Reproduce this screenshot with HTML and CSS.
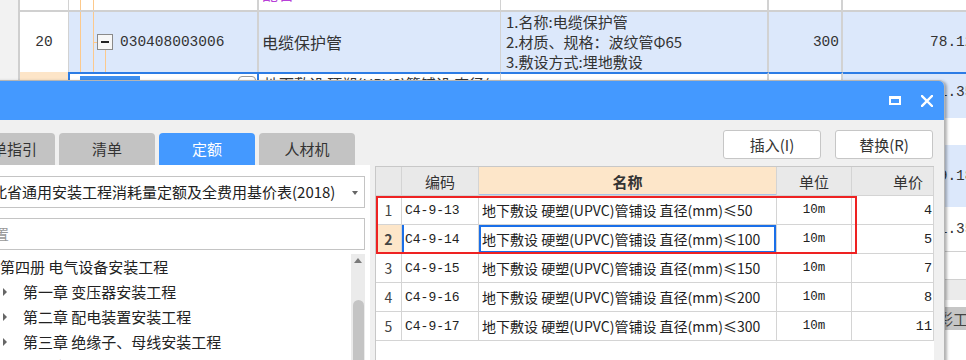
FILE: index.html
```html
<!DOCTYPE html>
<html lang="zh-CN">
<head>
    <meta charset="UTF-8">
    <meta name="viewport" content="width=device-width, initial-scale=1.0">
    <title>查询定额</title>
    <link rel="stylesheet" href="styles.css">
</head>
<body>

<!-- background sheet (partly covered by the dialog) -->
<div class="sheet">
    <div class="row row-top">
        <div class="c gut"></div>
        <div class="c no"></div>
        <div class="c code">
            <span class="vline v1"></span><span class="vline v2"></span>
            <span class="peek purple mono">030408003005</span>
        </div>
        <div class="c name"><span class="peek purple">配管</span></div>
        <div class="c desc"></div>
        <div class="c qty"><span class="peek purple mono">300.00</span></div>
        <div class="c price"></div>
    </div>

    <div class="row row-20">
        <div class="c gut"></div>
        <div class="c no mono">20</div>
        <div class="c code">
            <span class="vline v1"></span><span class="vline v2"></span>
            <span class="hline"></span><span class="vline v3"></span>
            <span class="fold"></span>
            <span class="mono">030408003006</span>
        </div>
        <div class="c name">电缆保护管</div>
        <div class="c desc">1.名称:电缆保护管<br>2.材质、规格：波纹管Φ65<br>3.敷设方式:埋地敷设</div>
        <div class="c qty mono">300</div>
        <div class="c price mono">78.12</div>
    </div>

    <div class="row row-edit">
        <div class="c gut"></div>
        <div class="c no"></div>
        <div class="c code">
            <span class="sel"></span>
            <span class="pick"></span>
        </div>
        <div class="c name">地下敷设 硬塑(UPVC)管铺设 直径(mm)≤100</div>
        <div class="c desc"></div>
        <div class="c qty"></div>
        <div class="c price mono">41.35</div>
    </div>

    <div class="row lo h27"><div class="fill"></div><div class="c price"></div></div>
    <div class="row lo h62 blue"><div class="fill"></div><div class="c price mono">69.18</div></div>
    <div class="row lo h45"><div class="fill"></div><div class="c price mono">41.35</div></div>
    <div class="row lo h28"><div class="fill"></div><div class="c price"></div></div>
    <div class="row lo h20 band"><div class="fill"></div><div class="c price"></div></div>
    <div class="row lo h7"><div class="fill"></div><div class="c price"></div></div>
    <div class="row lo h23 dark"><div class="fill"></div><div class="c label">色彩工程</div></div>
</div>

<!-- query dialog -->
<div class="dialog">
    <div class="titlebar">
        <span class="win-max"></span>
        <svg class="win-close" width="12" height="12" viewBox="0 0 12 12">
            <path d="M1 1 L11 11 M11 1 L1 11" stroke="#fff" stroke-width="2.4" stroke-linecap="square"/>
        </svg>
    </div>

    <div class="dlg-body">
        <div class="toolbar">
            <div class="tabs">
                <div class="tab">清单指引</div>
                <div class="tab">清单</div>
                <div class="tab active">定额</div>
                <div class="tab">人材机</div>
            </div>
            <div class="actions">
                <button class="btn">插入(I)</button>
                <button class="btn">替换(R)</button>
            </div>
        </div>

        <div class="content">
            <div class="side">
                <div class="select">湖北省通用安装工程消耗量定额及全费用基价表(2018)<span class="caret"></span></div>
                <div class="search">位置</div>
                <div class="tree-wrap">
                    <ul class="tree">
                        <li class="root">第四册 电气设备安装工程</li>
                        <li><i class="tri"></i>第一章 变压器安装工程</li>
                        <li><i class="tri"></i>第二章 配电装置安装工程</li>
                        <li><i class="tri"></i>第三章 绝缘子、母线安装工程</li>
                        <li><i class="tri"></i>第四章 控制、继电保护屏及低压电器安装工程</li>
                    </ul>
                    <div class="vscroll">
                        <span class="up"></span>
                        <span class="thumb"></span>
                    </div>
                </div>
            </div>

            <div class="grid">
                <div class="g-row g-head">
                    <div class="g-c g-no"></div>
                    <div class="g-c g-code">编码</div>
                    <div class="g-c g-name">名称</div>
                    <div class="g-c g-unit">单位</div>
                    <div class="g-c g-price">单价</div>
                </div>
                <div class="g-row">
                    <div class="g-c g-no">1</div>
                    <div class="g-c g-code">C4-9-13</div>
                    <div class="g-c g-name">地下敷设 硬塑(UPVC)管铺设 直径(mm)≤50</div>
                    <div class="g-c g-unit">10m</div>
                    <div class="g-c g-price">4</div>
                </div>
                <div class="g-row current">
                    <div class="g-c g-no">2</div>
                    <div class="g-c g-code">C4-9-14</div>
                    <div class="g-c g-name">地下敷设 硬塑(UPVC)管铺设 直径(mm)≤100</div>
                    <div class="g-c g-unit">10m</div>
                    <div class="g-c g-price">5</div>
                </div>
                <div class="g-row">
                    <div class="g-c g-no">3</div>
                    <div class="g-c g-code">C4-9-15</div>
                    <div class="g-c g-name">地下敷设 硬塑(UPVC)管铺设 直径(mm)≤150</div>
                    <div class="g-c g-unit">10m</div>
                    <div class="g-c g-price">7</div>
                </div>
                <div class="g-row">
                    <div class="g-c g-no">4</div>
                    <div class="g-c g-code">C4-9-16</div>
                    <div class="g-c g-name">地下敷设 硬塑(UPVC)管铺设 直径(mm)≤200</div>
                    <div class="g-c g-unit">10m</div>
                    <div class="g-c g-price">8</div>
                </div>
                <div class="g-row">
                    <div class="g-c g-no">5</div>
                    <div class="g-c g-code">C4-9-17</div>
                    <div class="g-c g-name">地下敷设 硬塑(UPVC)管铺设 直径(mm)≤300</div>
                    <div class="g-c g-unit">10m</div>
                    <div class="g-c g-price">11</div>
                </div>
                <div class="mark"></div> <!-- red highlight around rows 1-2 -->
            </div>
        </div>
    </div>
</div>

</body>
</html>
```

FILE: styles.css
```css
* {
    box-sizing: border-box;
}

html, body {
    margin: 0;
    padding: 0;
}

body {
    width: 966px;
    height: 360px;
    overflow: hidden;
    position: relative;
    background: #fff;
    color: #333;
    font-family: "Noto Sans CJK SC", sans-serif;
}

.mono {
    font-family: "Liberation Mono", "Noto Sans CJK SC", monospace;
    font-size: 14.5px;
}

/* ---------- background sheet ---------- */

.sheet {
    font-size: 16px;
    width: 983px;
}

.row {
    display: flex;
}

.c {
    flex: none;
    border-right: 1px solid #d2d2d2;
    overflow: hidden;
    white-space: nowrap;
}

.gut {
    width: 20px;
    background: #f2f2f2;
    border-right: 2px solid #cfcfcf;
}

.no { width: 49px; }
.code { width: 190px; border-right-width: 2px; position: relative; }
.name { width: 242px; }
.desc { width: 268px; border-right-width: 2px; }
.qty { width: 74px; border-right-width: 2px; }
.price { width: 140px; border-right: none; padding-left: 87px; }

.row-top { height: 12px; }

.row-top .c:not(.gut) {
    border-bottom: 2px solid #d0d0d0;
}

/* only the lower edge of these texts shows above the row line */
.peek {
    display: block;
    height: 16px;
    line-height: 16px;
    transform: translateY(-15px);
}

.purple { color: #b83fd8; }

.row-top .code .peek { padding-left: 78px; font-size: 12px; }
.row-top .name .peek { padding-left: 3px; }
.row-top .qty .peek { text-align: right; padding-right: 1px; }

.vline {
    position: absolute;
    top: 0;
    bottom: 0;
    width: 1px;
    background: #fcc98c;
}

.v1 { left: 11px; }
.v2 { left: 24px; }
.v3 { left: 36px; top: 38px; }

.hline {
    position: absolute;
    left: 24px;
    top: 30px;
    width: 5px;
    height: 1px;
    background: #fcc98c;
}

.row-20 { height: 60px; }

.row-20 .c { background: #dce8fb; }
.row-20 .gut { background: #f2f2f2; }
.row-20 .no { background: #fff; }

.row-20 .no {
    display: flex;
    align-items: center;
    justify-content: center;
    color: #333;
}

.row-20 .code {
    display: flex;
    align-items: center;
    gap: 7px;
    padding-left: 28px;
}

.fold {
    position: relative;
    width: 16px;
    height: 16px;
    border: 1px solid #8a8a8a;
    background: #f7f7f7;
}

.fold::after {
    content: "";
    position: absolute;
    left: 3px;
    top: 6px;
    width: 8px;
    height: 2px;
    background: #222;
}

.row-20 .name {
    display: flex;
    align-items: center;
    padding-left: 3px;
}

.row-20 .desc {
    padding-left: 5px;
    font-size: 15px;
    line-height: 20px;
}

.row-20 .qty {
    display: flex;
    align-items: center;
    justify-content: flex-end;
    padding-right: 2px;
}

.row-20 .price,
.row-edit .price {
    display: flex;
    align-items: center;
}

.row-edit { height: 46px; }

.row-edit .no { background: #fde5c8; }

.row-edit .code {
    margin-left: -1px;
    width: 191px;
    border: 2px solid #2c7ce5;
    display: flex;
    align-items: flex-start;
    padding-top: 2px;
}

.row-edit .name,
.row-edit .desc,
.row-edit .qty,
.row-edit .price {
    border-top: 2px solid #2c7ce5;
}

.row-edit .name {
    padding-left: 5px;
    font-size: 15px;
    line-height: 20px;
}

.row-edit .price {
    background: #dce8fb;
    padding-bottom: 8px;
}

.sel {
    width: 60px;
    height: 16px;
    margin-left: 10px;
    background: #3d8ff0;
}

.pick {
    width: 18px;
    height: 14px;
    margin-left: auto;
    margin-right: 1px;
    border: 1px solid #9a9a9a;
    border-radius: 4px;
}

.fill {
    width: 843px;
    flex: none;
}

.lo .price { font-size: 14.5px; display: flex; align-items: center; }

.h27 { height: 27px; }
.h62 { height: 62px; }
.h45 { height: 45px; border-bottom: 1px solid #d0d0d0; }
.h28 { height: 28px; border-bottom: 1px solid #d0d0d0; }
.h20 { height: 20px; }
.h7 { height: 7px; }
.h23 { height: 23px; }

.blue { background: #dce8fb; }
.band { background: #ebebeb; }
.dark { background: #c6c6c6; }

.label {
    width: 140px;
    border-right: none;
    padding-left: 80px;
    font-size: 15px;
    line-height: 23px;
    color: #444;
}

/* ---------- dialog ---------- */

.dialog {
    position: absolute;
    left: -50px;
    top: 80px;
    width: 995px;
    height: 295px;
    background: #f0f0f0;
    border: 1px solid #b5b5b5;
    border-radius: 6px 6px 0 0;
    box-shadow: 2px 1px 3px rgba(0, 0, 0, 0.3);
    overflow: hidden;
    display: flex;
    flex-direction: column;
}

.titlebar {
    flex: none;
    height: 39px;
    background: #4499ff;
    display: flex;
    align-items: center;
    justify-content: flex-end;
    gap: 20px;
    padding-right: 11px;
}

.win-max {
    width: 12px;
    height: 9px;
    border: 2px solid #fff;
    border-top-width: 3px;
}

.dlg-body {
    flex: 1;
    display: flex;
    flex-direction: column;
}

.toolbar {
    flex: none;
    height: 45px;
    display: flex;
    justify-content: space-between;
    padding: 0 11px 0 8px;
}

.tabs {
    align-self: flex-end;
    display: flex;
    gap: 4px;
}

.tab {
    width: 96px;
    height: 32px;
    line-height: 32px;
    text-align: center;
    font-size: 15px;
    color: #333;
    background: #c3c3c3;
    border-radius: 4px 4px 0 0;
}

.tab.active {
    background: #4499ff;
    color: #fff;
}

.actions {
    margin-top: 10px;
    display: flex;
    gap: 14px;
}

.btn {
    width: 98px;
    height: 29px;
    padding: 0;
    background: #fff;
    border: 1px solid #c6c6c6;
    border-radius: 3px;
    font-family: "Noto Sans CJK SC", sans-serif;
    font-size: 15px;
    color: #333;
}

.content {
    flex: 1;
    display: flex;
}

.side {
    width: 419px;
    background: #fff;
    padding: 11px 5px 0 8px;
    display: flex;
    flex-direction: column;
}

.select {
    position: relative;
    height: 32px;
    border: 1px solid #c4c4c4;
    padding-left: 17px;
    font-size: 15px;
    line-height: 30px;
    color: #222;
    white-space: nowrap;
}

.caret {
    position: absolute;
    right: 6px;
    top: 14px;
    border-left: 3px solid transparent;
    border-right: 3px solid transparent;
    border-top: 4px solid #666;
}

.search {
    margin-top: 10px;
    height: 32px;
    border: 1px solid #c4c4c4;
    padding-left: 19px;
    font-size: 15px;
    line-height: 30px;
    color: #999;
}

.tree-wrap {
    flex: 1;
    margin-top: 4px;
    display: flex;
}

.tree {
    flex: 1;
    margin: 0;
    padding: 0;
    list-style: none;
    font-size: 15px;
    color: #222;
    white-space: nowrap;
    overflow: hidden;
}

.tree li {
    height: 25px;
    line-height: 25px;
    padding-left: 44px;
    display: flex;
    align-items: center;
}

.tree li.root {
    padding-left: 41px;
}

.tri {
    width: 0;
    height: 0;
    margin-right: 16px;
    border-top: 4px solid transparent;
    border-bottom: 4px solid transparent;
    border-left: 4px solid #666;
}

.vscroll {
    width: 14px;
    background: #ebebeb;
    display: flex;
    flex-direction: column;
    align-items: center;
    padding-top: 4px;
}

.up {
    border-left: 4px solid transparent;
    border-right: 4px solid transparent;
    border-bottom: 5px solid #7a7a7a;
}

.thumb {
    flex: 1;
    width: 11px;
    margin-top: 37px;
    background: #c4c4c4;
    border-radius: 6px 6px 0 0;
}

/* ---------- result grid ---------- */

.grid {
    position: relative;
    width: 559px;
    margin: 1px 0 0 5px;
    background: #fff;
    border-left: 1px solid #c8c8c8;
    border-top: 1px solid #c8c8c8;
    font-size: 14px;
    color: #222;
}

.g-row {
    display: flex;
    height: 29px;
    border-bottom: 1px solid #d4d4d4;
}

.g-c {
    flex: none;
    border-right: 1px solid #d4d4d4;
    display: flex;
    align-items: center;
    white-space: nowrap;
    overflow: hidden;
}

.g-no { width: 26px; justify-content: center; font-size: 14px; color: #444; }
.g-code { width: 77px; padding-left: 3px; font-family: "Liberation Mono", monospace; font-size: 13px; }
.g-name { width: 298px; padding-left: 3px; }
.g-unit { width: 75px; justify-content: center; font-family: "Liberation Mono", monospace; font-size: 12.5px; }
.g-price { width: 82px; justify-content: flex-end; padding-right: 1px; font-family: "Liberation Mono", monospace; font-size: 13.5px; }

.g-head .g-c {
    background: #e9e9e9;
    font-family: "Noto Sans CJK SC", sans-serif;
    font-size: 15px;
    color: #333;
}

.g-head .g-code { justify-content: center; padding-left: 0; }
.g-head .g-name { justify-content: center; padding-left: 0; background: #fde6c9; font-weight: bold; box-shadow: inset 0 -1px 0 #a9c4e8; }
.g-head .g-price { padding-right: 10px; }

.current .g-no { background: #fde6c9; font-weight: bold; }
.current .g-code { box-shadow: inset 2px 0 0 #1a6fe8; }
.current .g-name { box-shadow: inset 0 0 0 2px #1a6fe8; }

.mark {
    position: absolute;
    left: 0;
    top: 29px;
    width: 481px;
    height: 58px;
    border: 2px solid #ee2222;
}
```
